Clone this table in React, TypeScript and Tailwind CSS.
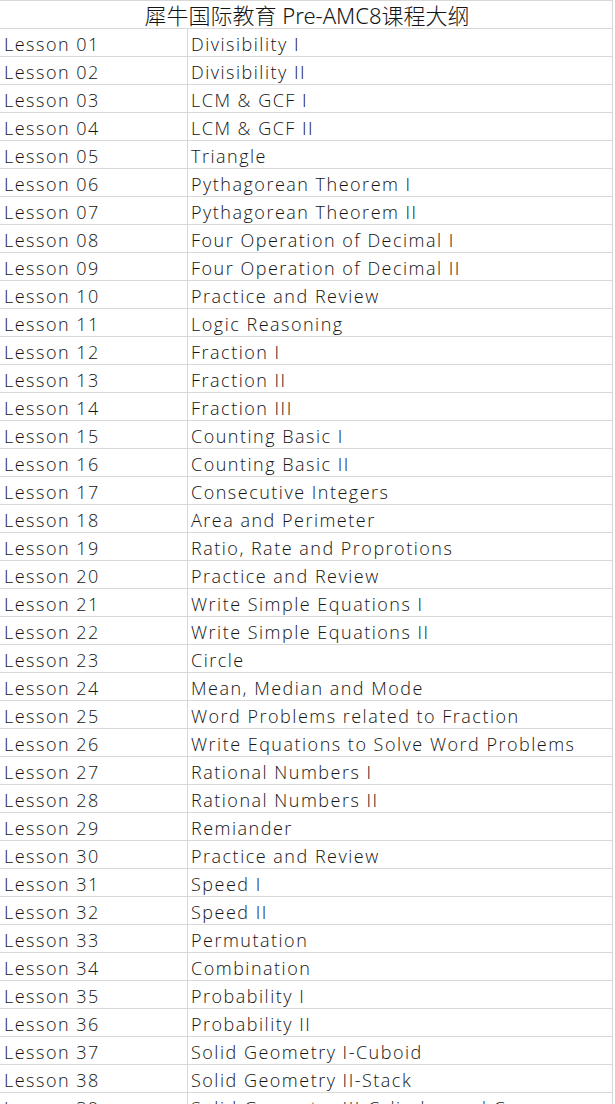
import React from "react";

const rows: [string, string][] = [
  ["Lesson 01", "Divisibility I"],
  ["Lesson 02", "Divisibility II"],
  ["Lesson 03", "LCM & GCF I"],
  ["Lesson 04", "LCM & GCF II"],
  ["Lesson 05", "Triangle"],
  ["Lesson 06", "Pythagorean Theorem I"],
  ["Lesson 07", "Pythagorean Theorem II"],
  ["Lesson 08", "Four Operation of Decimal I"],
  ["Lesson 09", "Four Operation of Decimal II"],
  ["Lesson 10", "Practice and Review"],
  ["Lesson 11", "Logic Reasoning"],
  ["Lesson 12", "Fraction I"],
  ["Lesson 13", "Fraction II"],
  ["Lesson 14", "Fraction III"],
  ["Lesson 15", "Counting Basic I"],
  ["Lesson 16", "Counting Basic II"],
  ["Lesson 17", "Consecutive Integers"],
  ["Lesson 18", "Area and Perimeter"],
  ["Lesson 19", "Ratio, Rate and Proprotions"],
  ["Lesson 20", "Practice and Review"],
  ["Lesson 21", "Write Simple Equations I"],
  ["Lesson 22", "Write Simple Equations II"],
  ["Lesson 23", "Circle"],
  ["Lesson 24", "Mean, Median and Mode"],
  ["Lesson 25", "Word Problems related to Fraction"],
  ["Lesson 26", "Write Equations to Solve Word Problems"],
  ["Lesson 27", "Rational Numbers I"],
  ["Lesson 28", "Rational Numbers II"],
  ["Lesson 29", "Remiander"],
  ["Lesson 30", "Practice and Review"],
  ["Lesson 31", "Speed I"],
  ["Lesson 32", "Speed II"],
  ["Lesson 33", "Permutation"],
  ["Lesson 34", "Combination"],
  ["Lesson 35", "Probability I"],
  ["Lesson 36", "Probability II"],
  ["Lesson 37", "Solid Geometry I-Cuboid"],
  ["Lesson 38", "Solid Geometry II-Stack"],
  ["Lesson 39", "Solid Geometry III-Cylinder and Cone"],
];

export default function App() {
  return (
    <div
      className="w-[615px] h-[1104px] overflow-hidden bg-white text-[#141414]"
      style={{ fontFamily: '"Open Sans", "Noto Sans CJK SC", sans-serif' }}
    >
      <div className="w-[613px] h-[29px] border-t border-b border-r border-[#d8d8d8] flex items-center justify-center pl-[2px]">
        <div
          className="text-[22px] leading-none whitespace-nowrap font-light"
          style={{ fontFamily: '"Noto Sans", "Noto Sans CJK SC", sans-serif' }}
        >
          犀牛国际教育 Pre-AMC8课程大纲
        </div>
      </div>
      {rows.map(([a, b]) => (
        <div key={a} className="flex w-[613px] h-[28px] border-b border-[#d8d8d8]">
          <div className="w-[188px] border-r border-[#d8d8d8] pl-[4px] pt-[3px] flex items-center text-[18px] tracking-[1.5px] font-light leading-none whitespace-nowrap">
            {a}
          </div>
          <div className="w-[425px] border-r border-[#d8d8d8] pl-[3px] pt-[3px] flex items-center text-[18px] tracking-[1.5px] font-light leading-none whitespace-nowrap overflow-hidden">
            {b}
          </div>
        </div>
      ))}
    </div>
  );
}
